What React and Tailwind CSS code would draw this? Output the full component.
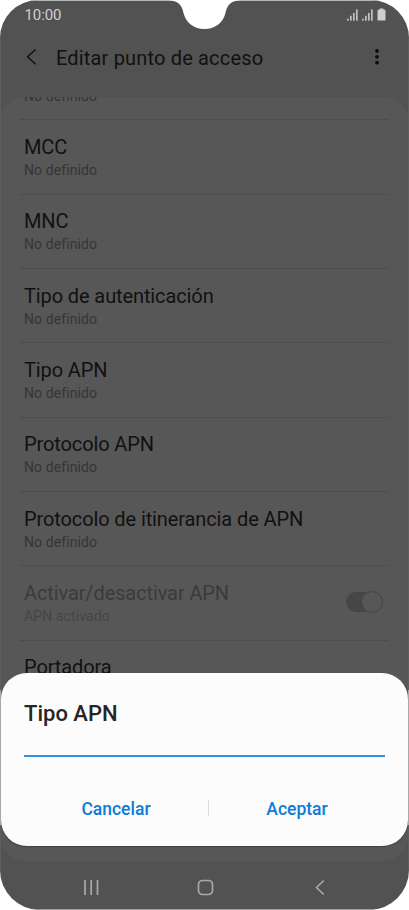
const rows = [
  { title: 'MCC', sub: 'No definido' },
  { title: 'MNC', sub: 'No definido' },
  { title: 'Tipo de autenticación', sub: 'No definido' },
  { title: 'Tipo APN', sub: 'No definido' },
  { title: 'Protocolo APN', sub: 'No definido' },
  { title: 'Protocolo de itinerancia de APN', sub: 'No definido' },
  { title: 'Activar/desactivar APN', sub: 'APN activado', disabled: true },
  { title: 'Portadora', sub: '' },
];

function Signal() {
  return (
    <svg width="11" height="12" viewBox="0 0 11 12" fill="#c0c0c0">
      <rect x="0" y="9.7" width="1.7" height="2" />
      <rect x="3" y="6.8" width="1.7" height="4.9" />
      <rect x="6" y="4" width="1.7" height="7.7" />
      <rect x="9" y="0.5" width="1.7" height="11.2" />
    </svg>
  );
}

function StatusBar() {
  return (
    <div className="flex h-[30px] items-center justify-between pl-[24.5px] pr-[23.5px]">
      <span className="text-[15px] leading-[30px] tracking-[-0.1px] text-[#cfcfcf]">10:00</span>
      <div className="mt-[-1px] flex items-center gap-[4px]">
        <Signal />
        <Signal />
        <svg width="9" height="13" viewBox="0 0 9 13" fill="#cfcfcf">
          <path d="M2.5 0.5h4v1.2h1.2q.8 0 .8.8v9.2q0 .8-.8.8H1.3q-.8 0-.8-.8V2.5q0-.8.8-.8h1.2z" />
        </svg>
      </div>
    </div>
  );
}

function Header() {
  return (
    <header className="flex h-[67px] items-start pl-[26px] pr-[29px]">
      <svg className="mt-[18px]" width="12" height="18" viewBox="0 0 12 18" fill="none" stroke="#111" strokeWidth="1.5">
        <path d="M9.5 1.5L1.7 8.8L9.5 16.2" />
      </svg>
      <h1 className="ml-[18px] flex-1 text-[20px] leading-[56px] tracking-[0.17px] text-[#111]">Editar punto de acceso</h1>
      <svg className="mt-[18px]" width="6" height="18" viewBox="0 0 6 18" fill="#0d0d0d">
        <circle cx="3" cy="3" r="1.9" />
        <circle cx="3" cy="8.8" r="1.9" />
        <circle cx="3" cy="14.7" r="1.9" />
      </svg>
    </header>
  );
}

function Row({ title, sub, disabled }) {
  return (
    <li className="flex h-[74.35px] shrink-0 items-center border-b border-[#4d4d4d] pl-[4px] pr-[6px]">
      <div className="flex-1 pt-[2px]">
        <div className={`text-[20px] leading-[24px] tracking-[-0.11px] ${disabled ? 'text-[#3b3b3b]' : 'text-[#111]'}`}>{title}</div>
        <div className={`h-[22px] text-[14px] leading-[22px] tracking-[0.1px] ${disabled ? 'text-[#464646]' : 'text-[#353535]'}`}>{sub}</div>
      </div>
      {disabled && (
        <div className="mb-[2px] flex h-[20px] w-[37px] items-center justify-end rounded-full bg-[#464646]">
          <div className="-my-px h-[22px] w-[22px] shrink-0 rounded-full border border-[#464646] bg-[#575757]" />
        </div>
      )}
    </li>
  );
}

function Dialog() {
  return (
    <div className="absolute left-px right-px top-[673px] flex h-[173px] flex-col rounded-[26px] bg-[#fcfcfc] px-[23px] shadow-[0_1px_1px_rgba(0,0,0,0.25)]">
      <h2 className="mt-[27px] text-[22px] font-medium leading-[28px] text-[#252525]">Tipo APN</h2>
      <div className="mt-[27px] h-[2px] bg-[#3390dc]" />
      <div className="mt-[35px] flex h-[34px] items-center text-[17.5px] font-medium text-[#0c7bd8]">
        <button className="w-[184px]">Cancelar</button>
        <span className="-mt-[2px] h-[16px] w-px bg-[#dedede]" />
        <button className="flex-1">Aceptar</button>
      </div>
    </div>
  );
}

function NavBar() {
  return (
    <nav className="flex h-[49px] items-start pl-[84px] pt-[18px]">
      <svg width="16" height="17" viewBox="0 0 16 17" stroke="#a9a9a9" strokeWidth="1.7">
        <path d="M1 1v15M7.2 1v15M13.5 1v15" />
      </svg>
      <svg className="ml-[97px]" width="17" height="17" viewBox="0 0 17 17" fill="none" stroke="#a9a9a9" strokeWidth="1.7">
        <rect x="1.5" y="1.5" width="14" height="14" rx="4" />
      </svg>
      <svg className="ml-[101px]" width="10" height="17" viewBox="0 0 10 17" fill="none" stroke="#a9a9a9" strokeWidth="1.6">
        <path d="M8.8 1.5L1.5 8.5L8.8 15.5" />
      </svg>
    </nav>
  );
}

export default function App() {
  return (
    <div className="h-[910px] w-[409px] overflow-hidden bg-white font-['Roboto',sans-serif]">
      <div className="relative flex h-[910px] flex-col overflow-hidden rounded-t-[38px] rounded-b-[40px] bg-[#525252]">
        <StatusBar />
        <Header />
        <main className="flex h-[764px] flex-col overflow-hidden rounded-[26px] bg-[#575757] px-[20px]">
          <div className="flex h-[23.4px] shrink-0 items-start border-b border-[#4d4d4d] pl-[4px]">
            <span className="-mt-[12px] text-[14px] leading-[22px] tracking-[0.1px] text-[#353535]">No definido</span>
          </div>
          <ul className="flex flex-col">
            {rows.map((row) => (
              <Row key={row.title} {...row} />
            ))}
          </ul>
        </main>
        <NavBar />
        <Dialog />
        <svg className="pointer-events-none absolute inset-0" width="409" height="910" viewBox="0 0 409 910" fill="none">
          <path d="M0.5 690V38M0.5 825V870M408.5 690V38M408.5 825V870" stroke="#5e5e5e" />
          <path d="M0.5 690V825M408.5 690V825" stroke="#a8a8a8" />
          <path d="M30 0.5H379" stroke="#b2b7b4" />
          <path d="M36 909.5H373" stroke="#a0a0a0" />
          <path d="M168 0C178 0.8 182 5 183.5 13C186 23 194 29 204.5 29C215 29 223 23 225.5 13C227 5 231 0.8 241 0Z" fill="#fff" />
        </svg>
      </div>
    </div>
  );
}
